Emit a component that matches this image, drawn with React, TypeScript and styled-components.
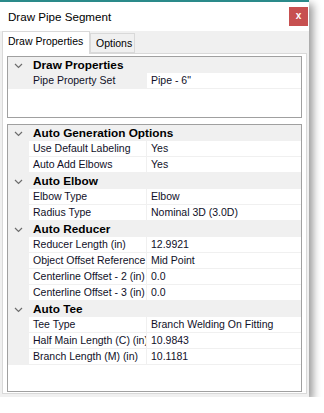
import React from 'react';
import styled, { createGlobalStyle } from 'styled-components';

type Prop = { label: string; value: string };
type Category = { title: string; props: Prop[] };

const drawProps: Category[] = [
    { title: 'Draw Properties', props: [{ label: 'Pipe Property Set', value: 'Pipe - 6"' }] },
];

const autoProps: Category[] = [
    {
        title: 'Auto Generation Options',
        props: [
            { label: 'Use Default Labeling', value: 'Yes' },
            { label: 'Auto Add Elbows', value: 'Yes' },
        ],
    },
    {
        title: 'Auto Elbow',
        props: [
            { label: 'Elbow Type', value: 'Elbow' },
            { label: 'Radius Type', value: 'Nominal 3D (3.0D)' },
        ],
    },
    {
        title: 'Auto Reducer',
        props: [
            { label: 'Reducer Length (in)', value: '12.9921' },
            { label: 'Object Offset Reference', value: 'Mid Point' },
            { label: 'Centerline Offset - 2 (in)', value: '0.0' },
            { label: 'Centerline Offset - 3 (in)', value: '0.0' },
        ],
    },
    {
        title: 'Auto Tee',
        props: [
            { label: 'Tee Type', value: 'Branch Welding On Fitting' },
            { label: 'Half Main Length (C) (in)', value: '10.9843' },
            { label: 'Branch Length (M) (in)', value: '10.1181' },
        ],
    },
];

const Chevron = () => (
    <svg width="9" height="6" viewBox="0 0 9 6">
        <polyline points="1,1 4.5,4.5 8,1" fill="none" stroke="#6d6d6d" strokeWidth="1.2" />
    </svg>
);

const PropertyGrid = ({ data, height, selected }: { data: Category[]; height: number; selected?: string }) => (
    <Grid $height={height}>
        {data.map((cat) => (
            <React.Fragment key={cat.title}>
                <CategoryRow>
                    <Margin>
                        <Chevron />
                    </Margin>
                    <CategoryTitle>{cat.title}</CategoryTitle>
                </CategoryRow>
                {cat.props.map((p) => (
                    <PropRow key={p.label}>
                        <Margin />
                        <Label $selected={p.label === selected}>{p.label}</Label>
                        <Value>{p.value}</Value>
                    </PropRow>
                ))}
            </React.Fragment>
        ))}
    </Grid>
);

const App = () => {
    return (
        <>
            <GlobalStyle />
            <Window>
                <TitleBar>
                    <Title>Draw Pipe Segment</Title>
                    <CloseButton>x</CloseButton>
                </TitleBar>
                <TabStrip>
                    <Tab $active>Draw Properties</Tab>
                    <Tab>Options</Tab>
                </TabStrip>
                <Panel>
                    <PropertyGrid data={drawProps} height={62} selected="Pipe Property Set" />
                    <PropertyGrid data={autoProps} height={268} />
                </Panel>
            </Window>
        </>
    );
};

export default App;

const GlobalStyle = createGlobalStyle`
    body {
        margin: 0;
        background: #ffffff;
        font-family: 'Liberation Sans', Arial, sans-serif;
    }
`;

const Window = styled.div`
    width: 309px;
    height: 397px;
    box-sizing: border-box;
    background: #f0f0f0;
    border-top: 2px solid #2a8a8a;
    box-shadow: 4px 4px 8px rgba(0, 0, 0, 0.4);
    display: flex;
    flex-direction: column;
`;

const TitleBar = styled.div`
    height: 29px;
    background: #ffffff;
    display: flex;
    align-items: center;
    justify-content: space-between;
    padding-left: 8px;
`;

const Title = styled.span`
    font-size: 11.6px;
    color: #000000;
`;

const CloseButton = styled.div`
    width: 19px;
    height: 19px;
    margin-right: 1px;
    background: #c75050;
    color: #ffffff;
    font-weight: bold;
    font-size: 10px;
    line-height: 17px;
    text-align: center;
`;

const TabStrip = styled.div`
    height: 22px;
    display: flex;
    align-items: flex-end;
    padding-left: 2px;
`;

const Tab = styled.div<{ $active?: boolean }>`
    box-sizing: border-box;
    height: ${(props) => (props.$active ? '23px' : '20px')};
    width: ${(props) => (props.$active ? '88px' : '45px')};
    margin-bottom: ${(props) => (props.$active ? '-1px' : '0')};
    padding-left: 5px;
    border: 1px solid #d9d9d9;
    border-bottom: ${(props) => (props.$active ? 'none' : '1px solid #d9d9d9')};
    background: ${(props) => (props.$active ? '#ffffff' : '#f0f0f0')};
    position: relative;
    z-index: ${(props) => (props.$active ? 1 : 0)};
    font-size: 10.5px;
    line-height: ${(props) => (props.$active ? '19px' : '18px')};
    color: #000000;
    white-space: nowrap;
`;

const Panel = styled.div`
    margin: 0 2px;
    height: 341px;
    box-sizing: border-box;
    border: 1px solid #d9d9d9;
    background: #ffffff;
    padding: 2px 4px 1px 4px;
    display: flex;
    flex-direction: column;
    gap: 6px;
`;

const Grid = styled.div<{ $height: number }>`
    height: ${(props) => props.$height}px;
    box-sizing: border-box;
    border: 1px solid #a0a0a0;
    background: #ffffff;
    overflow: hidden;
`;

const CategoryRow = styled.div`
    display: flex;
    height: 16px;
    background: #f0f0f0;
`;

const Margin = styled.div`
    width: 21px;
    flex: none;
    background: #f0f0f0;
    display: flex;
    align-items: center;
    justify-content: center;
    padding-top: 1px;
    box-sizing: border-box;
`;

const CategoryTitle = styled.div`
    padding-left: 4px;
    font-size: 11.8px;
    font-weight: bold;
    line-height: 16px;
    color: #000000;
    white-space: nowrap;
`;

const PropRow = styled.div`
    display: flex;
    height: 16px;
    box-sizing: border-box;
    border-bottom: 1px solid #f0f0f0;
`;

const Label = styled.div<{ $selected?: boolean }>`
    width: 118px;
    flex: none;
    box-sizing: border-box;
    padding-left: 4px;
    border-right: 1px solid #f0f0f0;
    background: ${(props) => (props.$selected ? '#f0f0f0' : '#ffffff')};
    font-size: 10.5px;
    line-height: 15px;
    color: #101028;
    white-space: nowrap;
    overflow: hidden;
`;

const Value = styled.div`
    flex: 1;
    padding-left: 4px;
    font-size: 10.5px;
    line-height: 15px;
    color: #101028;
    white-space: nowrap;
    overflow: hidden;
`;
